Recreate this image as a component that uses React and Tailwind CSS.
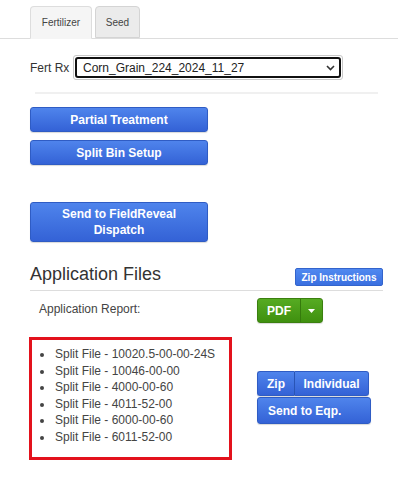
import React from "react";

const FILES = [
  "Split File - 10020.5-00-00-24S",
  "Split File - 10046-00-00",
  "Split File - 4000-00-60",
  "Split File - 4011-52-00",
  "Split File - 6000-00-60",
  "Split File - 6011-52-00",
];

const blueBtn =
  "bg-gradient-to-b from-[#4f84ec] to-[#3462d6] border border-[#2f5cc4] rounded-[3px] text-white font-bold text-[12px] leading-[16px] shadow-[0_1px_1px_rgba(0,0,0,0.15)]";

export default function App() {
  return (
    <div className="w-[398px] h-[503px] bg-white text-[#333] font-['Liberation_Sans',Arial,sans-serif] overflow-hidden">
      {/* Tabs */}
      <div className="flex items-end pt-[6px] pl-[30px] border-b border-[#dddddd] h-[39px]">
        <div className="w-[62px] h-[33px] -mb-px bg-[#f5f5f5] border border-[#dddddd] border-b-[#f5f5f5] rounded-t-[4px] flex items-center justify-center text-[10px] text-[#444]">
          Fertilizer
        </div>
        <div className="ml-[3px] w-[45px] h-[32px] bg-[#ebebeb] border border-[#d4d4d4] rounded-t-[4px] flex items-center justify-center text-[10px] text-[#444]">
          Seed
        </div>
      </div>

      {/* Fert Rx */}
      <div className="flex items-center mt-[16px] pl-[30px]">
        <span className="text-[12px] w-[43px]">Fert Rx</span>
        <div className="w-[270px] h-[25px] rounded-[3px] border border-[#c8c8c8] p-px">
          <div className="h-full rounded-[3px] border-2 border-[#111] flex items-center justify-between pl-[6px] pr-[4px] text-[12px] text-[#222]">
            <span>Corn_Grain_224_2024_11_27</span>
            <svg width="9" height="6" viewBox="0 0 9 6" className="mt-px">
              <path d="M1 1l3.5 3.5L8 1" fill="none" stroke="#333" strokeWidth="1.6" />
            </svg>
          </div>
        </div>
      </div>

      <div className="ml-[35px] w-[343px] h-[2px] bg-[#f0f0f0] mt-[12px]" />

      {/* Action buttons */}
      <div className="pl-[30px] mt-[13px] flex flex-col">
        <button className={`${blueBtn} w-[178px] h-[25px]`}>Partial Treatment</button>
        <button className={`${blueBtn} w-[178px] h-[25px] mt-[8px]`}>Split Bin Setup</button>
        <button className={`${blueBtn} w-[178px] h-[40px] mt-[37px]`}>
          Send to FieldReveal
          <br />
          Dispatch
        </button>
      </div>

      {/* Application files */}
      <div className="ml-[30px] w-[353px] mt-[20px] border-b border-[#dddddd] pb-[4px] flex items-end justify-between">
        <h2 className="text-[18px] leading-[24px] text-[#333]">Application Files</h2>
        <button className="bg-gradient-to-b from-[#5089f0] to-[#3a6fe0] border border-[#3364cc] rounded-[2px] text-white font-bold text-[10px] w-[88px] h-[18px]">
          Zip Instructions
        </button>
      </div>

      <div className="flex items-start mt-[7px]">
        <span className="ml-[39px] w-[218px] text-[12px] text-[#444] mt-[2px]">Application Report:</span>
        <div className="flex h-[25px] w-[66px] rounded-[3px] border border-[#3b800f] bg-gradient-to-b from-[#56ab22] to-[#3f900e] text-white shadow-[0_1px_1px_rgba(0,0,0,0.15)]">
          <span className="w-[43px] flex items-center justify-center font-bold text-[12px] border-r border-[#357a0c]">PDF</span>
          <span className="flex-1 flex items-center justify-center">
            <svg width="7" height="4" viewBox="0 0 7 4">
              <path d="M0 0h7L3.5 4z" fill="#fff" />
            </svg>
          </span>
        </div>
      </div>

      {/* Split files */}
      <div className="flex items-start mt-[14px] ml-[29px]">
        <div className="w-[203px] h-[123px] border-[3px] border-[#e3121c] pt-[6px]">
          <ul className="list-disc pl-[22px] text-[12px] leading-[16.5px] text-[#444]">
            {FILES.map((f) => (
              <li key={f} className="pl-[1px]">{f}</li>
            ))}
          </ul>
        </div>
        <div className="ml-[25px] mt-[34px] flex flex-col">
          <div className="flex w-[112px] h-[25px]">
            <button className={`${blueBtn} w-[38px] h-full rounded-r-none border-r-[#2a55b8]`}>Zip</button>
            <button className={`${blueBtn} flex-1 h-full rounded-l-none border-l-0`}>Individual</button>
          </div>
          <button className={`${blueBtn} w-[114px] h-[27px] mt-px text-left pl-[10px]`}>Send to Eqp.</button>
        </div>
      </div>
    </div>
  );
}
